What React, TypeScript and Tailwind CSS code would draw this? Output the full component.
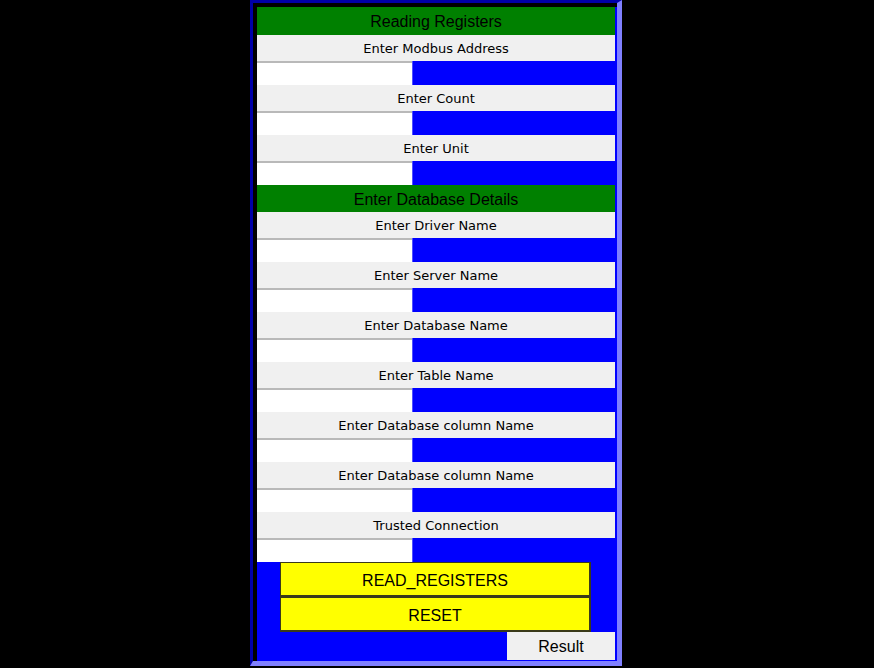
import React from 'react';

const registerFields = ['Enter Modbus Address', 'Enter Count', 'Enter Unit'];
const dbFields = [
  'Enter Driver Name',
  'Enter Server Name',
  'Enter Database Name',
  'Enter Table Name',
  'Enter Database column Name',
  'Enter Database column Name',
  'Trusted Connection',
];

function Header({ title, h }: { title: string; h: string }) {
  return (
    <div className={`${h} bg-[#008000] flex items-center justify-center pt-[2px] text-[16px] text-black font-['Liberation_Sans',Arial,sans-serif]`}>
      {title}
    </div>
  );
}

function Field({ label }: { label: string }) {
  return (
    <div>
      <div className="h-[26px] bg-[#f0f0f0] flex items-center justify-center pt-[1px] text-[13px] text-black font-['DejaVu_Sans',Tahoma,sans-serif]">
        {label}
      </div>
      <div className="h-[24px] flex">
        <input className="w-[155px] h-full bg-white border-t-2 border-[#b9b9b9] outline-none px-1 text-[12px]" />
        <div className="w-px h-full bg-[#5050ff]" />
      </div>
    </div>
  );
}

function YellowButton({ text }: { text: string }) {
  return (
    <button className="ml-[23px] w-[311px] h-[35px] bg-[#ffff00] border-r-2 border-b-2 border-l border-t border-[#3a3a1a] pt-[3px] text-[16px] text-black font-['Liberation_Sans',Arial,sans-serif] flex items-center justify-center">
      {text}
    </button>
  );
}

export default function App() {
  return (
    <div className="w-[874px] h-[668px] bg-black pl-[250px]">
      <div className="w-[372px] h-[666px] border-l-[3px] border-t-[3px] border-l-[#0000a8] border-t-[#0000a8] border-r-[5px] border-b-[5px] border-r-[#8080ff] border-b-[#8080ff] bg-[#0000ff]">
        <div className="h-full border-l-4 border-t-4 border-black pr-[2px] flex flex-col">
          <Header title="Reading Registers" h="h-[28px]" />
          {registerFields.map((f) => (
            <Field key={f} label={f} />
          ))}
          <Header title="Enter Database Details" h="h-[27px]" />
          {dbFields.map((f, i) => (
            <Field key={i} label={f} />
          ))}
          <YellowButton text="READ_REGISTERS" />
          <YellowButton text="RESET" />
          <div className="flex justify-end">
            <div className="w-[108px] h-[28px] bg-[#f0f0f0] flex items-center justify-center pt-[1px] text-[16px] text-black font-['Liberation_Sans',Arial,sans-serif]">
              Result
            </div>
          </div>
        </div>
      </div>
    </div>
  );
}
